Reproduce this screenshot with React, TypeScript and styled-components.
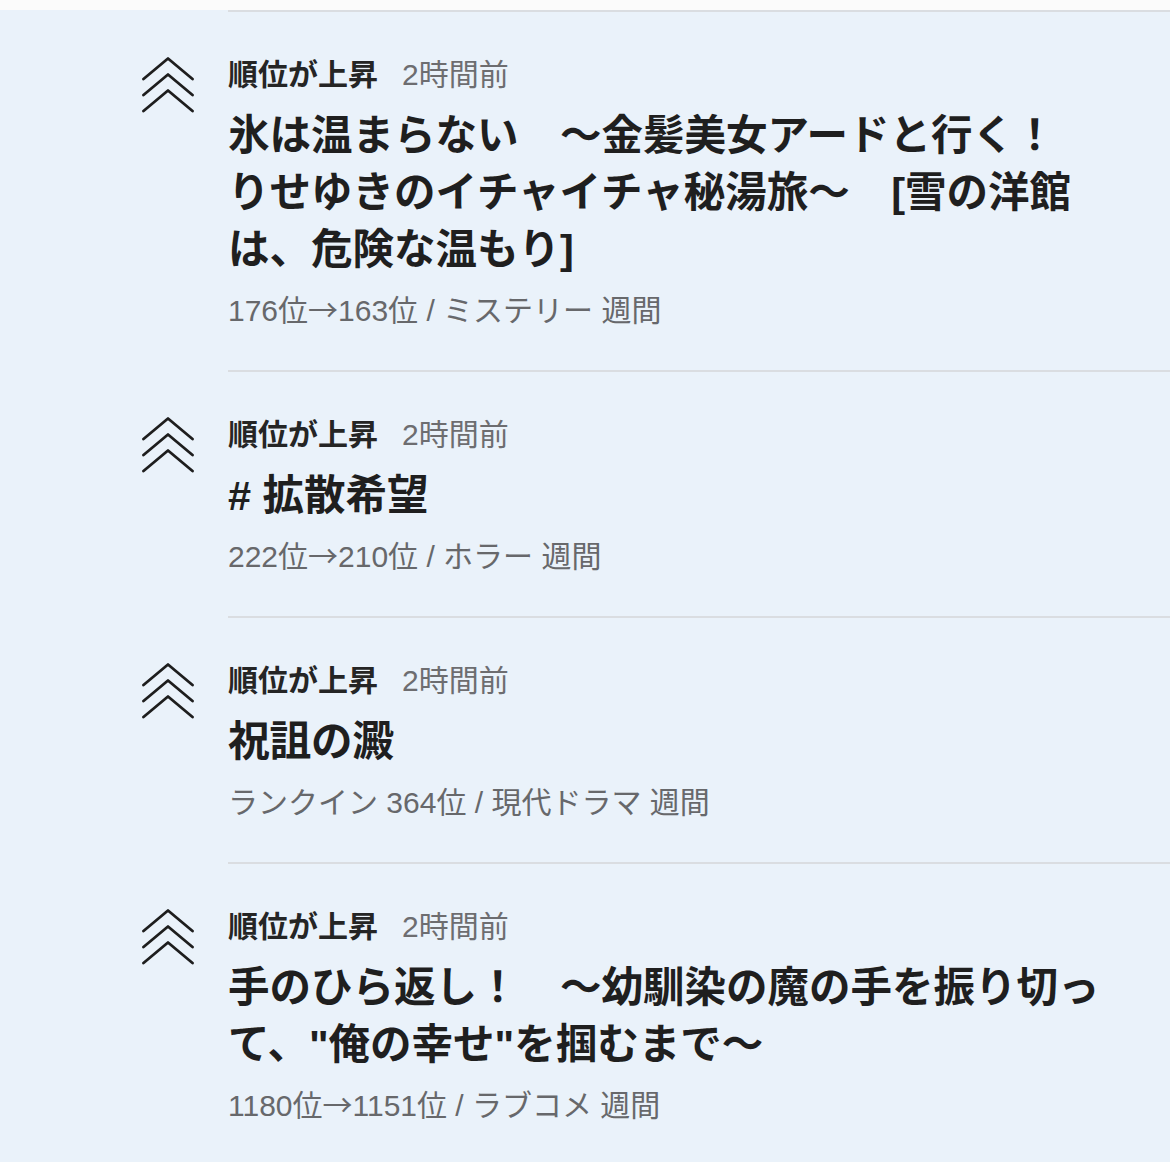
import styled, { createGlobalStyle } from "styled-components";

const GlobalStyle = createGlobalStyle`
  html, body {
    margin: 0;
    padding: 0;
    background: #eaf2fa;
  }
  * {
    box-sizing: border-box;
  }
`;

const Wrapper = styled.div`
  width: 100%;
  min-height: 1162px;
  background: #eaf2fa;
  font-family: "Liberation Sans", "Noto Sans CJK JP", sans-serif;
  color: #222;
`;

const PrevTail = styled.div`
  height: 10px;
  background: #fbfbfb;
`;

const List = styled.ul`
  list-style: none;
  margin: 0;
  padding: 0;
`;

const Item = styled.li`
  display: flex;
  gap: 34px;
  padding-left: 142px;
`;

const IconCol = styled.div`
  flex: 0 0 52px;
  padding-top: 47px;
`;

const Body = styled.div<{ last?: boolean }>`
  flex: 1;
  min-width: 0;
  border-top: 2px solid #dadde1;
  padding: 42px 42px ${(props) => (props.last ? "33px" : "38px")} 0;
`;

const Head = styled.div`
  display: flex;
  align-items: baseline;
  gap: 24px;
  font-size: 30px;
  line-height: 42px;
`;

const Kind = styled.span`
  font-weight: 700;
  color: #252525;
`;

const Time = styled.span`
  color: #6d6d70;
`;

const Title = styled.h3`
  margin: 11px 0 12px;
  font-size: 41.5px;
  line-height: 57px;
  font-weight: 700;
  color: #1f1f1f;
  white-space: pre-line;
`;

const Meta = styled.p`
  margin: 0;
  height: 42px;
  font-size: 30px;
  line-height: 42px;
  color: #67686b;
`;

const Arrow = styled.span`
  font-family: "Noto Sans CJK JP", sans-serif;
  line-height: 1;
`;

const RankUpIcon = () => (
  <svg width="52" height="56" viewBox="0 0 52 56" fill="none">
    {[0, 16, 32].map((y) => (
      <polyline
        key={y}
        points={`1.5,${y + 22} 26,${y + 1.5} 50.5,${y + 22}`}
        stroke="#1e1e1e"
        strokeWidth="2.8"
        strokeLinecap="round"
        strokeLinejoin="round"
      />
    ))}
  </svg>
);

const items = [
  {
    title:
      "氷は温まらない　～金髪美女アードと行く！\nりせゆきのイチャイチャ秘湯旅～　[雪の洋館は、危険な温もり]",
    meta: "176位→163位 / ミステリー 週間",
  },
  { title: "# 拡散希望", meta: "222位→210位 / ホラー 週間" },
  { title: "祝詛の澱", meta: "ランクイン 364位 / 現代ドラマ 週間" },
  {
    title: "手のひら返し！　～幼馴染の魔の手を振り切って、\"俺の幸せ\"を掴むまで～",
    meta: "1180位→1151位 / ラブコメ 週間",
  },
];

// the arrow glyph in Liberation Sans is tiny, so take it from the CJK font
const renderMeta = (meta: string) =>
  meta.split("→").map((part, i) => (
    <span key={i}>
      {i > 0 && <Arrow>→</Arrow>}
      {part}
    </span>
  ));

function App() {
  return (
    <Wrapper>
      <GlobalStyle />
      <PrevTail />
      <List>
        {items.map((item, i) => (
          <Item key={i}>
            <IconCol>
              <RankUpIcon />
            </IconCol>
            <Body last={i === items.length - 1}>
              <Head>
                <Kind>順位が上昇</Kind>
                <Time>2時間前</Time>
              </Head>
              <Title>{item.title}</Title>
              <Meta>{renderMeta(item.meta)}</Meta>
            </Body>
          </Item>
        ))}
      </List>
    </Wrapper>
  );
}

export default App;
